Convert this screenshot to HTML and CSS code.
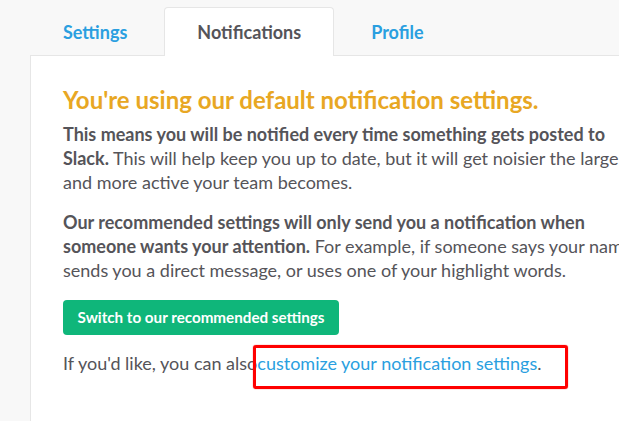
FILE: index.html
```html
<!DOCTYPE html>
<html lang="en">
<head>
<meta charset="utf-8">
<title>Notifications</title>
<link rel="stylesheet" href="styles.css">
</head>
<body>
<div class="page">
  <nav class="tabs">
    <a class="tab" href="#">Settings</a>
    <a class="tab active" href="#">Notifications</a>
    <a class="tab" href="#">Profile</a>
  </nav>
  <section class="panel">
    <div class="content">
      <h1 class="title">You're using our default notification settings.</h1>
      <p class="para"><strong>This means you will be notified every time something gets posted to Slack.</strong> This will help keep you up to date, but it will get noisier the larger and more active your team becomes.</p>
      <p class="para"><strong>Our recommended settings will only send you a notification when someone wants your attention.</strong> For example, if someone says your name, sends you a direct message, or uses one of your highlight words.</p>
      <button class="btn" type="button">Switch to our recommended settings</button>
      <p class="para last">If you'd like, you can also<span class="highlight"><a class="link" href="#">customize your notification settings</a>.</span></p>
    </div>
  </section>
</div>
</body>
</html>
```
FILE: styles.css
```css
html, body {
  margin: 0;
  padding: 0;
}
body {
  background: #f8f8f8;
  font-family: Lato, "Open Sans", sans-serif;
  color: #555459;
  overflow: hidden;
  width: 619px;
  height: 421px;
}
.page {
  padding: 7px 0 0 30px;
  width: 760px;
}
.tabs {
  display: flex;
  gap: 4px;
  height: 48px;
}
.tab {
  display: block;
  padding: 0 32px;
  border: 1px solid transparent;
  border-bottom: none;
  border-radius: 4px 4px 0 0;
  font-size: 18px;
  font-weight: 700;
  line-height: 49px;
  height: 47px;
  color: #2a9fe0;
  text-decoration: none;
}
.tab.active {
  background: #ffffff;
  border-color: #e6e6e6;
  color: #555459;
  height: 48px;
  position: relative;
  z-index: 1;
}
.panel {
  background: #ffffff;
  border-top: 1px solid #e6e6e6;
  border-left: 1px solid #e6e6e6;
  min-height: 400px;
  padding: 29px 0 0 32px;
}
.content {
  width: 585px;
}
.title {
  margin: 0 0 8px;
  font-size: 24px;
  font-weight: 700;
  line-height: 29px;
  color: #e8a723;
}
.para {
  margin: 0 0 16px;
  font-size: 18px;
  line-height: 24px;
}
.para strong {
  font-weight: 700;
}
.btn {
  display: block;
  height: 35px;
  width: 276px;
  padding: 0;
  margin: 18px 0 16px;
  border: none;
  border-radius: 4px;
  background: #0fb67a;
  color: #ffffff;
  font-family: Lato, "Open Sans", sans-serif;
  font-size: 15.2px;
  font-weight: 700;
  line-height: 35px;
  text-align: center;
}
.highlight {
  position: relative;
}
.highlight::after {
  content: "";
  position: absolute;
  top: -7px;
  bottom: -15px;
  left: -4px;
  right: -27px;
  border: 3px solid #ff0000;
  border-radius: 3px;
  box-shadow: 0 0 1px #ff0000;
}
.link {
  color: #2a9fe0;
  text-decoration: none;
}
```
